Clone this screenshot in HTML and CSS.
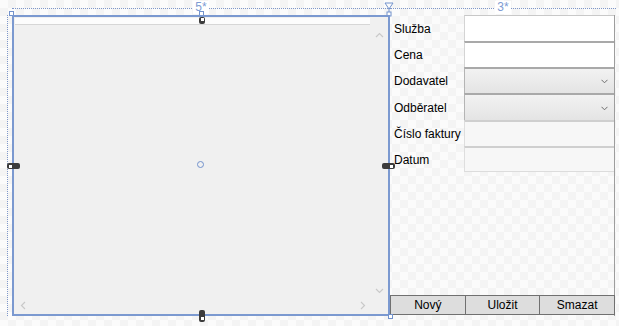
FILE: index.html
```html
<!DOCTYPE html>
<html>
<head>
<meta charset="utf-8">
<link rel="stylesheet" href="styles.css">
</head>
<body>
<div class="canvas">
  <div class="corner"><span class="sq sq-corner"></span></div>
  <div class="ruler"><span class="rlabel">5*</span><span class="sq sq-mid"></span></div>
  <div class="ruler ruler-right"><span class="rlabel">3*</span>
    <svg class="tri" width="10" height="12" viewBox="0 0 10 12"><path d="M1 1 H9 L5 7 Z M5 7 V11" fill="none" stroke="#7292cc" stroke-width="1"/><rect x="3" y="10" width="4" height="4" fill="#fff" stroke="#7292cc"/></svg>
  </div>
  <div class="vruler"></div>
  <div class="list">
    <div class="list-header"></div>
    <div class="list-body">
      <div class="vscroll">
        <svg class="chev" width="9" height="6" viewBox="0 0 9 6"><path d="M1 5 L4.5 1.5 L8 5" fill="none" stroke="#c9c9c9" stroke-width="1.2"/></svg>
        <svg class="chev" width="9" height="6" viewBox="0 0 9 6"><path d="M1 1 L4.5 4.5 L8 1" fill="none" stroke="#c9c9c9" stroke-width="1.2"/></svg>
      </div>
    </div>
    <div class="hscroll">
      <svg class="chev" width="6" height="9" viewBox="0 0 6 9"><path d="M5 1 L1.5 4.5 L5 8" fill="none" stroke="#c9c9c9" stroke-width="1.2"/></svg>
      <svg class="chev" width="6" height="9" viewBox="0 0 6 9"><path d="M1 1 L4.5 4.5 L1 8" fill="none" stroke="#c9c9c9" stroke-width="1.2"/></svg>
    </div>
    <span class="center-dot"></span>
    <span class="handle handle-top"></span>
    <span class="handle handle-bottom"></span>
    <span class="handle handle-left"></span>
    <span class="handle handle-right"></span>
    <span class="sq sq-br"></span>
  </div>
  <div class="form">
    <div class="row"><label>Služba</label><div class="tb"></div></div>
    <div class="row"><label>Cena</label><div class="tb"></div></div>
    <div class="row"><label>Dodavatel</label><div class="cb"><svg width="7" height="5" viewBox="0 0 7 5"><path d="M0.5 0.8 L3.5 3.8 L6.5 0.8" fill="none" stroke="#6d6d6d" stroke-width="1"/></svg></div></div>
    <div class="row"><label>Odběratel</label><div class="cb"><svg width="7" height="5" viewBox="0 0 7 5"><path d="M0.5 0.8 L3.5 3.8 L6.5 0.8" fill="none" stroke="#6d6d6d" stroke-width="1"/></svg></div></div>
    <div class="row"><label>Číslo faktury</label><div class="tb tb-dis"></div></div>
    <div class="row"><label>Datum</label><div class="tb tb-dis tb-last"></div></div>
    <div class="buttons">
      <button>Nový</button>
      <button>Uložit</button>
      <button>Smazat</button>
    </div>
  </div>
</div>
</body>
</html>
```
FILE: styles.css
```css
html, body {
  margin: 0;
  padding: 0;
}
body {
  width: 619px;
  height: 326px;
  overflow: hidden;
  font-family: "Liberation Sans", Arial, sans-serif;
  font-size: 12px;
  color: #000;
  background-color: #f8f8f8;
  background-image: conic-gradient(#f4f4f4 25%, #fbfbfb 0 50%, #f4f4f4 0 75%, #fbfbfb 0);
  background-size: 16px 16px;
}
.canvas {
  position: relative;
  display: grid;
  grid-template-columns: 12px 378px 225px;
  grid-template-rows: 15px 301px;
}
.corner {
  position: relative;
}
.ruler {
  position: relative;
  height: 8px;
  border-bottom: 1px dotted #7f97c9;
  display: flex;
  justify-content: center;
}
.ruler-right {
  margin-right: -1px;
}
.rlabel {
  position: relative;
  top: 1px;
  height: 13px;
  line-height: 13px;
  padding: 0 2px;
  font-size: 12px;
  color: #7e9bd2;
  background: #fff;
}
.tri {
  position: absolute;
  left: -6px;
  top: 2px;
  overflow: visible;
}
.sq {
  position: absolute;
  width: 3px;
  height: 3px;
  border: 1px solid #7292cc;
  background: #fff;
}
.sq-corner {
  left: 9px;
  top: 11px;
}
.sq-mid {
  left: 187px;
  top: 11px;
}
.sq-br {
  right: -5px;
  bottom: -5px;
}
.vruler {
  width: 7px;
  border-right: 1px dotted #7f97c9;
}
.list {
  position: relative;
  display: flex;
  flex-direction: column;
  border: 2px solid #7b99d0;
  background: #f0f0f0;
  box-sizing: border-box;
}
.list-header {
  height: 6px;
  margin: 1px 18px 0 1px;
  background: #fcfcfc;
  border-bottom: 1px solid #d6d6d6;
}
.list-body {
  flex: 1;
  display: flex;
  justify-content: flex-end;
}
.vscroll {
  width: 18px;
  display: flex;
  flex-direction: column;
  justify-content: space-between;
  align-items: center;
  padding: 7px 0 2px;
}
.hscroll {
  height: 18px;
  display: flex;
  justify-content: space-between;
  align-items: center;
  padding: 0 22px 0 6px;
}
.chev {
  display: block;
}
.center-dot {
  position: absolute;
  left: 183px;
  top: 144px;
  width: 5px;
  height: 5px;
  border: 1px solid #7292cc;
  border-radius: 50%;
  background: #f0f0f0;
}
.handle {
  position: absolute;
  background: #3c3c3c;
  border-radius: 2px;
  box-sizing: border-box;
}
.handle::after {
  content: "";
  position: absolute;
  width: 3px;
  height: 3px;
  background: #fff;
}
.handle-top {
  left: 185px;
  top: 0;
  width: 6px;
  height: 7px;
}
.handle-top::after {
  left: 1.5px;
  top: 1px;
}
.handle-bottom {
  left: 185px;
  bottom: -8px;
  width: 6px;
  height: 12px;
}
.handle-bottom::after {
  left: 1.5px;
  bottom: 2px;
}
.handle-left {
  left: -7px;
  top: 146px;
  width: 13px;
  height: 6px;
}
.handle-left::after {
  left: 2px;
  top: 1.5px;
}
.handle-right {
  right: -7px;
  top: 146px;
  width: 13px;
  height: 6px;
}
.handle-right::after {
  right: 2px;
  top: 1.5px;
}
.form {
  display: flex;
  flex-direction: column;
  border-right: 1px solid #9d9d9d;
  box-sizing: border-box;
  height: 301px;
}
.row {
  display: flex;
  height: 26px;
  flex-shrink: 0;
}
.row:nth-child(4) {
  height: 27px;
}
.row label {
  width: 74px;
  padding: 2px 0 0 4px;
  box-sizing: border-box;
  display: flex;
  align-items: center;
  white-space: nowrap;
}
.tb {
  flex: 1;
  background: #fff;
  border-top: 2px solid #a9a9a9;
  border-left: 1px solid #d4d4d4;
  box-sizing: border-box;
}
.row:first-child .tb {
  border-top: 1px solid #c8c8c8;
}
.tb-dis {
  background: #f7f7f7;
  border-top: 2px solid #cfcfcf;
  border-left: 1px solid #dedede;
}
.tb-last {
  border-bottom: 1px solid #dcdcdc;
}
.cb {
  flex: 1;
  display: flex;
  align-items: center;
  justify-content: flex-end;
  padding-right: 6px;
  padding-top: 1px;
  background: linear-gradient(#f2f2f2, #e4e4e4);
  border-top: 2px solid #a9a9a9;
  border-left: 1px solid #b4b4b4;
  box-sizing: border-box;
}
.cb svg {
  display: block;
}
.buttons {
  margin-top: auto;
  display: flex;
  height: 20px;
  margin-bottom: 1px;
  margin-right: -1px;
}
.buttons button {
  flex: 1;
  margin: 0;
  padding: 0;
  font-family: "Liberation Sans", Arial, sans-serif;
  font-size: 12px;
  color: #000;
  background: #dddddd;
  border: 1px solid #707070;
  border-right: none;
  height: 20px;
}
.buttons button:last-child {
  border-right: 1px solid #707070;
}
```
